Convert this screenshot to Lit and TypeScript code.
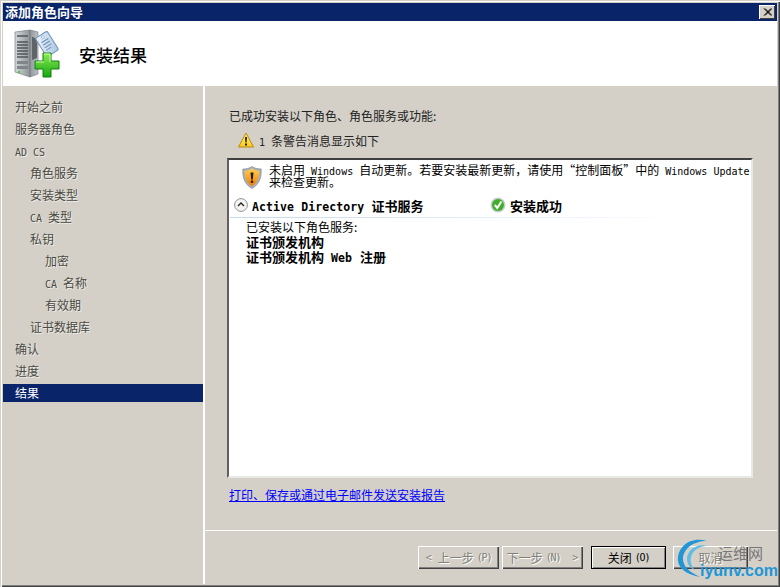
import { LitElement, html, css } from "lit";
import { customElement } from "lit/decorators.js";

const nav: [any, number][] = [
  ["开始之前", 0], ["服务器角色", 0], [html`<span class="l">AD CS</span>`, 0],
  ["角色服务", 1], ["安装类型", 1], [html`<span class="l">CA </span>类型`, 1], ["私钥", 1],
  ["加密", 2], [html`<span class="l">CA </span>名称`, 2], ["有效期", 2],
  ["证书数据库", 1], ["确认", 0], ["进度", 0],
];

@customElement("app-root")
export class AppRoot extends LitElement {
  static styles = css`
    :host { display: block; width: 780px; height: 587px; font-family: "Noto Sans CJK SC", "DejaVu Sans Mono", sans-serif; font-size: 12px; color: #000; }
    * { box-sizing: border-box; }
    .l { font-family: "DejaVu Sans Mono", monospace; font-size: 10px; white-space: pre; line-height: 0; }
    .lb { font-family: "DejaVu Sans Mono", monospace; font-size: 11.5px; font-weight: 700; letter-spacing: .1px; white-space: pre; line-height: 0; }
    .web { padding: 0 8px 0 7px; }
    .k { font-family: "DejaVu Sans Mono", monospace; font-size: 10px; letter-spacing: -1.2px; margin-left: 3px; line-height: 0; }
    .window { position: relative; width: 780px; height: 587px; padding: 3px; background: #d4d0c8; display: flex; flex-direction: column; overflow: hidden;
      box-shadow: inset 1px 1px 0 #d4d0c8, inset 2px 2px 0 #fff, inset -1px -1px 0 #404040, inset -2px -2px 0 #808080; }
    .title { height: 18px; flex: none; background: #0a246a; color: #fff; font-size: 13px; font-weight: 700; display: flex; align-items: center; justify-content: space-between; padding: 0 2px; line-height: 18px; }
    .close { width: 16px; height: 14px; background: #d4d0c8; box-shadow: inset 1px 1px 0 #fff, inset -1px -1px 0 #404040; display: flex; align-items: center; justify-content: center; }
    .header { height: 65px; flex: none; background: #fff; display: flex; align-items: center; padding-left: 9px; gap: 17px; }
    .header h1 { margin: 0; font-size: 17px; font-weight: 500; line-height: 22px; position: relative; top: 1px; }
    .main { flex: 1; display: flex; min-height: 0; }
    .side { width: 200px; flex: none; padding-top: 10px; }
    .item { height: 22px; line-height: 22px; color: #4a4a42; text-shadow: 1px 1px 0 rgba(255,255,255,.6); white-space: nowrap; }
    .item.sel { height: 18px; line-height: 18px; margin-top: 2px; background: #0a246a; color: #fff; text-shadow: none; }
    .right { flex: 1; border-left: 2px solid #fff; display: flex; flex-direction: column; min-width: 0; }
    .content { flex: 1; padding: 21px 24px 0 22px; display: flex; flex-direction: column; }
    .lead { height: 18px; line-height: 18px; margin-left: 2px; color: #222; }
    .warn { display: flex; align-items: center; gap: 5px; margin: 6px 0 0 11px; height: 18px; color: #222; }
    .box { margin-top: 9px; height: 320px; flex: none; background: #fff; padding: 5px 0 0 7px; border-top: 2px solid #404040; border-left: 2px solid #606060; border-right: 2px solid #e8e8e4; border-bottom: 2px solid #e8e8e4; overflow: hidden; }
    .notice { display: flex; gap: 7px; margin-left: 6px; height: 24px; }
    .notice p { margin: -1px 0 0; line-height: 12px; white-space: nowrap; }
    .role { display: flex; align-items: center; height: 22px; margin: 5px 0 0 -2px; width: 450px; font-size: 13px; font-weight: 700; }
    .rule { height: 1px; width: 452px; margin: 1px 0 0 -6px; background: linear-gradient(90deg, #c5d8ee, #e6eef9 60%, #f8fafe 90%, #fff); }
    .role .name { display: flex; align-items: center; gap: 4px; width: 256px; }
    .role .st { display: flex; align-items: center; gap: 4px; }
    .detail { margin: 1px 0 0 10px; line-height: 15px; }
    .detail b { display: block; font-size: 13px; font-weight: 700; }
    .link { margin: 8px 0 0 2px; height: 18px; line-height: 18px; color: #0000ff; text-decoration: underline; }
    .footer { height: 54px; flex: none; border-top: 1px solid #fff; display: flex; padding: 15px 0 0 213px; }
    .btn { width: 81px; height: 23px; background: #d4d0c8; box-shadow: inset 1px 1px 0 #fff, inset -1px -1px 0 #404040, inset -2px -2px 0 #808080; display: flex; align-items: center; justify-content: center; margin-right: 3px; white-space: pre; }
    .btn.dis { color: #808078; text-shadow: 1px 1px 0 #fff; }
    .btn.def { width: 75px; margin: 0 7px 0 5px; box-shadow: inset 0 0 0 1px #000, inset 2px 2px 0 #fff, inset -2px -2px 0 #808080; }
    .btn.cancel { width: 75px; }
    .mark { position: absolute; left: 676px; top: 537px; width: 104px; height: 46px; pointer-events: none; }
    .mark .cn { position: absolute; left: 42px; top: 6px; font-size: 15px; line-height: 20px; color: #777; white-space: nowrap; }
    .mark .en { position: absolute; left: 24px; top: 25px; font-family: "Liberation Sans", sans-serif; font-weight: 700; font-size: 16px; line-height: 18px; color: #2196d6; white-space: nowrap; }
    .mark svg { position: absolute; left: 0; top: 0; }
    svg { display: block; flex: none; }
  `;

  render() {
    return html`<div class="window">
      <div class="title"><span>添加角色向导</span>
        <div class="close"><svg width="9" height="8" viewBox="0 0 9 8"><path d="M1 0.5 8 7.5M2 0.5 9 7.5M8 0.5 1 7.5M9 0.5 2 7.5" stroke="#000" stroke-width="1"/></svg></div>
      </div>
      <div class="header">
        <svg width="50" height="52" viewBox="0 0 50 52">
          <defs>
            <linearGradient id="srv" x1="0" x2="1"><stop offset="0" stop-color="#d3d7da"/><stop offset="1" stop-color="#8d9498"/></linearGradient>
            <linearGradient id="side" x1="0" x2="1"><stop offset="0" stop-color="#8f979c"/><stop offset="1" stop-color="#bcc2c6"/></linearGradient>
            <linearGradient id="tag" x1="0" y1="0" x2="1" y2="1"><stop offset="0" stop-color="#eef4fb"/><stop offset="1" stop-color="#a9c6e4"/></linearGradient>
            <linearGradient id="plus" x1="0" y1="0" x2="0" y2="1"><stop offset="0" stop-color="#8dec55"/><stop offset="1" stop-color="#14a60e"/></linearGradient>
          </defs>
          <path d="M3 4 18 2V49L3 44Z" fill="url(#srv)" stroke="#6c7276" stroke-width=".6"/>
          <path d="M18 2 26 4V46L18 49Z" fill="url(#side)" stroke="#6c7276" stroke-width=".6"/>
          <path d="M5 8H16M5 14H16M5 17H16M5 20H16M5 23H16M5 26H16M5 29H16" stroke="#4f5559" stroke-width="1.4"/>
          <path d="M5 33H16V36H5ZM5 38H16V41H5Z" fill="#7f858a"/>
          <rect x="6" y="43" width="2" height="2" fill="#49c92d"/>
          <path d="M20 9C23 9 25 12 25 16V30L20 32Z" fill="#5e6468"/>
          <g transform="rotate(-32 35 16)">
            <rect x="28" y="5" width="14" height="22" rx="2" fill="url(#tag)" stroke="#6f93b8"/>
            <path d="M31 12H39M31 15H39M31 18H39M31 21H37" stroke="#6f8fb0" stroke-width="1"/>
            <circle cx="35" cy="8" r="1.4" fill="#fff" stroke="#6f93b8" stroke-width=".6"/>
          </g>
          <path d="M31 25H39V33H47V41H39V49H31V41H23V33H31Z" fill="url(#plus)" stroke="#127f10" stroke-width="1"/>
          <path d="M32 26H38V34M24 34H32" fill="none" stroke="#c6ff9f" stroke-width="1"/>
        </svg>
        <h1>安装结果</h1>
      </div>
      <div class="main">
        <div class="side">
          ${nav.map(([t, d]) => html`<div class="item" style="padding-left:${12 + d * 15}px">${t}</div>`)}
          <div class="item sel" style="padding-left:12px">结果</div>
        </div>
        <div class="right">
          <div class="content">
            <div class="lead">已成功安装以下角色、角色服务或功能:</div>
            <div class="warn">
              <svg width="16" height="16" viewBox="0 0 16 16"><defs><linearGradient id="wy" x1="0" y1="0" x2="0" y2="1"><stop offset="0" stop-color="#fff27a"/><stop offset="1" stop-color="#fdc91c"/></linearGradient></defs><path d="M8 1 15.5 15H.5Z" fill="url(#wy)" stroke="#b98a10" stroke-linejoin="round"/><path d="M7 5H9L8.6 10.5H7.4Z" fill="#222"/><rect x="7" y="11.5" width="2" height="2" fill="#222"/></svg>
              <span><span class="l">1 </span>条警告消息显示如下</span>
            </div>
            <div class="box">
              <div class="notice">
                <svg width="20" height="24" viewBox="0 0 20 24">
                  <defs><linearGradient id="sh" x1="0" y1="0" x2="0" y2="1"><stop offset="0" stop-color="#ffcf50"/><stop offset="1" stop-color="#f07c08"/></linearGradient></defs>
                  <path d="M10 1.5C7 3.5 4 4 0.8 4 0.5 12 2 19 10 23.5 18 19 19.5 12 19.2 4 16 4 13 3.5 10 1.5Z" fill="#a8b0b8" stroke="#7b838c" stroke-width=".6"/>
                  <path d="M10 3.5C7.5 5 5.5 5.7 2.6 5.9 2.6 12 4.5 17.7 10 21.2 15.5 17.7 17.4 12 17.4 5.9 14.5 5.7 12.5 5 10 3.5Z" fill="url(#sh)"/>
                  <path d="M8.5 7.5H11.5L10.8 14.5H9.2Z" fill="#2a1a05"/><rect x="8.8" y="15.5" width="2.4" height="2.4" fill="#2a1a05"/>
                </svg>
                <p>未启用<span class="l"> Windows </span>自动更新。若要安装最新更新，请使用“控制面板”中的<span class="l"> Windows Update</span><br>来检查更新。</p>
              </div>
              <div class="role">
                <div class="name">
                  <svg width="14" height="14" viewBox="0 0 14 14"><circle cx="7" cy="7" r="6.4" fill="#f3f3f3" stroke="#8d9194"/><path d="M4 8 7 5 10 8" fill="none" stroke="#222" stroke-width="1.3"/></svg>
                  <span><span class="lb">Active Directory </span>证书服务</span>
                </div>
                <div class="st">
                  <svg width="16" height="16" viewBox="0 0 16 16"><circle cx="8" cy="8" r="7.5" fill="#c9cdd0"/><circle cx="8" cy="8" r="6" fill="#3fae28"/><path d="M4.8 8 7.3 11 11.4 4.5" fill="none" stroke="#fff" stroke-width="2"/></svg>
                  <span>安装成功</span>
                </div>
              </div>
              <div class="rule"></div>
              <div class="detail">已安装以下角色服务:<b>证书颁发机构</b><b>证书颁发机构<span class="lb web">Web</span>注册</b></div>
            </div>
            <div class="link">打印、保存或通过电子邮件发送安装报告</div>
          </div>
          <div class="footer">
            <div class="btn dis"><span class="l">&lt; </span>上一步<span class="k">(P)</span></div>
            <div class="btn dis">下一步<span class="k">(N)</span><span class="l">  &gt;</span></div>
            <div class="btn def">关闭<span class="k">(O)</span></div>
            <div class="btn cancel dis">取消</div>
          </div>
        </div>
      </div>
      <div class="mark">
        <svg width="50" height="46" viewBox="0 0 50 46">
          <path d="M31 4C14 -1 1 10 2 24 3 31 9 37 24 40 13 35 7 29 7 22 7 12 17 4 31 4Z" fill="#2196d6"/>
          <path d="M31 9C20 6 11 14 11 22 11 27 14 31 19 33 15 29 14 24 15 20 17 13 23 9 31 9Z" fill="#5fbce6"/>
        </svg>
        <span class="cn">运维网</span>
        <span class="en">iyunv.com</span>
      </div>
    </div>`;
  }
}
